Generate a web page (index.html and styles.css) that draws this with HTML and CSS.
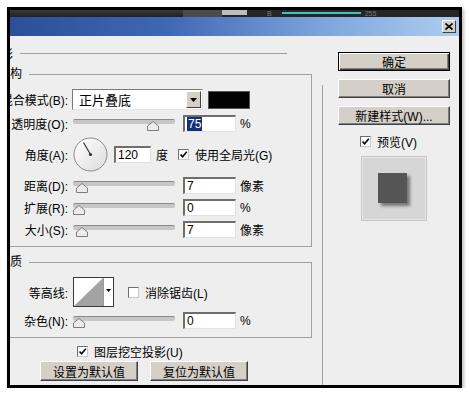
FILE: index.html
```html
<!DOCTYPE html>
<html lang="zh">
<head>
    <meta charset="UTF-8">
    <title>图层样式 - 投影</title>
    <link rel="stylesheet" href="styles.css">
</head>
<body>
    <div class="frame">
        <div class="strip">
            <span class="s1"></span>
            <span class="s2"></span>
            <span class="s3"></span>
            <span class="s-text s-b">B</span>
            <span class="s-cyan"></span>
            <span class="s-text">255</span>
        </div>

        <div class="titlebar">
            <button class="close">
                <svg width="8" height="7" viewBox="0 0 8 7"><path d="M0.5 0.5 L7.5 6.5 M7.5 0.5 L0.5 6.5" stroke="#000" stroke-width="1.6"/></svg>
            </button>
        </div>

        <div class="dialog">
            <div class="main">
                <div class="pane-head"><span>投影</span><i class="rule"></i></div>

                <fieldset class="group">
                    <legend>结构</legend>
                    <div class="rows">
                        <div class="row h21">
                            <span class="lbl">混合模式(B):</span>
                            <div class="select">
                                <span class="select-text">正片叠底</span>
                                <span class="select-btn"><svg width="7" height="4" viewBox="0 0 7 4"><polygon points="0,0 7,0 3.5,4" fill="#000"/></svg></span>
                            </div>
                            <span class="swatch"></span>
                        </div>
                        <div class="row">
                            <span class="lbl">透明度(O):</span>
                            <div class="slider"><div class="track"></div><svg class="thumb" style="margin-left:74px" width="12" height="10" viewBox="0 0 12 10"><polygon points="6,0.5 11.5,5 11.5,9.5 0.5,9.5 0.5,5" fill="#ececec" stroke="#7c7c7c"/></svg></div>
                            <span class="field"><span class="sel">75</span></span>
                            <span class="unit">%</span>
                        </div>
                        <div class="row h35">
                            <span class="lbl">角度(A):</span>
                            <svg class="dial" width="35" height="35" viewBox="0 0 35 35">
                                <defs>
                                    <linearGradient id="dialfill" x1="0" y1="0" x2="1" y2="1">
                                        <stop offset="0" stop-color="#ffffff"/>
                                        <stop offset="1" stop-color="#dcdcdc"/>
                                    </linearGradient>
                                </defs>
                                <circle cx="17.5" cy="17.5" r="16.5" fill="url(#dialfill)" stroke="#8a8a8a"/>
                                <path d="M17.5 17.5 L10.5 5.5" stroke="#333" stroke-width="1.2"/>
                                <circle cx="17.5" cy="17.5" r="1.6" fill="#333"/>
                            </svg>
                            <span class="field w37">120</span>
                            <span class="unit u5">度</span>
                            <span class="cb ml10"><svg width="9" height="9" viewBox="0 0 9 9"><path d="M1.5 4.5 L3.6 6.8 L7.8 1.8" fill="none" stroke="#000" stroke-width="1.6"/></svg></span>
                            <span class="cb-text">使用全局光(G)</span>
                        </div>
                        <div class="row">
                            <span class="lbl">距离(D):</span>
                            <div class="slider"><div class="track"></div><svg class="thumb" style="margin-left:3px" width="12" height="10" viewBox="0 0 12 10"><polygon points="6,0.5 11.5,5 11.5,9.5 0.5,9.5 0.5,5" fill="#ececec" stroke="#7c7c7c"/></svg></div>
                            <span class="field">7</span>
                            <span class="unit">像素</span>
                        </div>
                        <div class="row">
                            <span class="lbl">扩展(R):</span>
                            <div class="slider"><div class="track"></div><svg class="thumb" style="margin-left:0px" width="12" height="10" viewBox="0 0 12 10"><polygon points="6,0.5 11.5,5 11.5,9.5 0.5,9.5 0.5,5" fill="#ececec" stroke="#7c7c7c"/></svg></div>
                            <span class="field">0</span>
                            <span class="unit">%</span>
                        </div>
                        <div class="row">
                            <span class="lbl">大小(S):</span>
                            <div class="slider"><div class="track"></div><svg class="thumb" style="margin-left:3px" width="12" height="10" viewBox="0 0 12 10"><polygon points="6,0.5 11.5,5 11.5,9.5 0.5,9.5 0.5,5" fill="#ececec" stroke="#7c7c7c"/></svg></div>
                            <span class="field">7</span>
                            <span class="unit">像素</span>
                        </div>
                    </div>
                </fieldset>

                <fieldset class="group g2">
                    <legend>品质</legend>
                    <div class="rows">
                        <div class="row h30">
                            <span class="lbl">等高线:</span>
                            <div class="contour">
                                <svg width="29" height="28" viewBox="0 0 29 28"><polygon points="0,28 29,0 29,28" fill="#a3a3a3"/></svg>
                                <span class="contour-btn"><svg width="5" height="3" viewBox="0 0 5 3"><polygon points="0,0 5,0 2.5,3" fill="#000"/></svg></span>
                            </div>
                            <span class="cb ml14"></span>
                            <span class="cb-text">消除锯齿(L)</span>
                        </div>
                        <div class="row">
                            <span class="lbl">杂色(N):</span>
                            <div class="slider"><div class="track"></div><svg class="thumb" style="margin-left:0px" width="12" height="10" viewBox="0 0 12 10"><polygon points="6,0.5 11.5,5 11.5,9.5 0.5,9.5 0.5,5" fill="#ececec" stroke="#7c7c7c"/></svg></div>
                            <span class="field">0</span>
                            <span class="unit">%</span>
                        </div>
                    </div>
                </fieldset>

                <div class="row knock">
                    <span class="cb"><svg width="9" height="9" viewBox="0 0 9 9"><path d="M1.5 4.5 L3.6 6.8 L7.8 1.8" fill="none" stroke="#000" stroke-width="1.6"/></svg></span>
                    <span class="cb-text">图层挖空投影(U)</span>
                </div>

                <div class="defaults">
                    <button class="btn wide">设置为默认值</button>
                    <button class="btn wide">复位为默认值</button>
                </div>
            </div>

            <div class="side">
                <button class="btn side-btn default">确定</button>
                <button class="btn side-btn">取消</button>
                <button class="btn side-btn">新建样式(W)...</button>
                <div class="row preview-toggle">
                    <span class="cb"><svg width="9" height="9" viewBox="0 0 9 9"><path d="M1.5 4.5 L3.6 6.8 L7.8 1.8" fill="none" stroke="#000" stroke-width="1.6"/></svg></span>
                    <span class="cb-text">预览(V)</span>
                </div>
                <div class="preview"><div class="preview-square"></div></div>
            </div>
        </div>
    </div>
</body>
</html>
```

FILE: styles.css
```css
body {
    margin: 0;
    background-color: #fff;
    font-family: "Liberation Sans", "Noto Sans CJK SC", sans-serif;
    font-size: 12px;
    color: #000;
}
.frame {
    margin: 7px 0 0 7px;
    width: 455px;
    height: 381px;
    box-sizing: border-box;
    border: 3px solid #000;
    box-shadow: 2px 2px 3px rgba(0, 0, 0, 0.25);
    display: flex;
    flex-direction: column;
    overflow: hidden;
}

/* photoshop window showing behind */
.strip {
    height: 7px;
    display: flex;
    align-items: flex-start;
    background-color: #262626;
}
.s1 {
    width: 173px;
    height: 7px;
    background: linear-gradient(#3a3a3a, #222);
}
.s2 {
    width: 39px;
    height: 7px;
    background-color: #4b4b4b;
}
.s3 {
    width: 25px;
    height: 5px;
    background-color: #bdbdbd;
}
.s-text {
    font-size: 7px;
    line-height: 7px;
    color: #7a7a7a;
}
.s-b {
    margin: 0 10px 0 20px;
}
.s-cyan {
    width: 79px;
    height: 2px;
    margin: 2px 4px 0 0;
    background-color: #3cc4c4;
}

.titlebar {
    height: 19px;
    display: flex;
    align-items: center;
    justify-content: flex-end;
    padding-right: 3px;
    background: linear-gradient(to right, #2b4f98 0%, #3e68b4 35%, #7ea5dc 70%, #aecdf0 100%);
}
.close {
    width: 14px;
    height: 13px;
    padding: 0;
    display: flex;
    align-items: center;
    justify-content: center;
    background-color: #d4d0c8;
    border: 1px solid;
    border-color: #fff #404040 #404040 #fff;
}

.dialog {
    flex: 1;
    display: flex;
    background-color: #eeeeee;
}
.main {
    width: 313px;
    flex: none;
    padding-top: 9px;
    overflow: hidden;
    background: linear-gradient(#a0a0a0, #a0a0a0) right 0 top 49px / 1px 100% no-repeat;
}
.pane-head {
    height: 16px;
    width: 298px;
    margin-left: -21px;
    display: flex;
    align-items: center;
    gap: 7px;
}
.rule {
    flex: 1;
    border-top: 1px solid #a0a0a0;
}

.group {
    margin: 6px 0 0 -15px;
    width: 317px;
    box-sizing: border-box;
    padding: 8px 0 8px 0;
    border: 1px solid #a0a0a0;
    min-width: 0;
}
.group legend {
    padding: 0 7px 0 2px;
    line-height: 14px;
}
.g2 {
    margin-top: 8px;
}
.rows {
    display: flex;
    flex-direction: column;
    gap: 5px;
}
.row {
    display: flex;
    align-items: center;
    height: 17px;
    white-space: nowrap;
}
.h21 {
    height: 21px;
}
.h30 {
    height: 30px;
}
.h35 {
    height: 35px;
}
.lbl {
    width: 72px;
    flex: none;
    display: flex;
    justify-content: flex-end;
}

.select {
    width: 131px;
    height: 21px;
    margin-left: 4px;
    box-sizing: border-box;
    display: flex;
    align-items: center;
    background-color: #fff;
    border: 1px solid;
    border-color: #7a7a7a #e4e4e4 #e4e4e4 #7a7a7a;
}
.select-text {
    flex: 1;
    padding-left: 6px;
    font-size: 13px;
}
.select-btn {
    width: 15px;
    height: 17px;
    margin-right: 1px;
    box-sizing: border-box;
    display: flex;
    align-items: center;
    justify-content: center;
    background-color: #d4d0c8;
    border: 1px solid;
    border-color: #fff #404040 #404040 #fff;
}
.swatch {
    width: 42px;
    height: 18px;
    margin-left: 5px;
    box-sizing: border-box;
    background-color: #000;
    border: 1px solid #555;
}

.slider {
    width: 102px;
    flex: none;
    margin: 3px 0 0 5px;
}
.track {
    height: 4px;
    background-color: #c6c6c6;
    border-top: 1px solid #8a8a8a;
    border-radius: 2px;
}
.thumb {
    display: block;
    margin-top: -3px;
}

.field {
    width: 53px;
    height: 17px;
    margin-left: 8px;
    box-sizing: border-box;
    padding-left: 2px;
    display: flex;
    align-items: center;
    background-color: #fff;
    border-style: solid;
    border-width: 2px 1px 1px 2px;
    border-color: #6e6e6e #e2e2e2 #e2e2e2 #6e6e6e;
}
.w37 {
    width: 37px;
    margin-left: 6px;
}
.sel {
    padding: 0 1px;
    background-color: #12307a;
    color: #fff;
}
.unit {
    margin-left: 4px;
}
.u5 {
    margin-left: 5px;
}
.dial {
    margin-left: 5px;
    flex: none;
}

.cb {
    width: 11px;
    height: 11px;
    flex: none;
    box-sizing: border-box;
    display: flex;
    align-items: center;
    justify-content: center;
    background-color: #fff;
    border: 1px solid;
    border-color: #6e6e6e #c8c8c8 #c8c8c8 #6e6e6e;
}
.ml10 {
    margin-left: 10px;
}
.ml14 {
    margin-left: 14px;
}
.cb-text {
    margin-left: 6px;
}

.contour {
    width: 41px;
    height: 30px;
    margin-left: 5px;
    box-sizing: border-box;
    display: flex;
    background-color: #fff;
    border: 1px solid #3a3a3a;
}
.contour-btn {
    flex: 1;
    display: flex;
    align-items: center;
    justify-content: center;
    border-left: 1px solid #9a9a9a;
    padding-bottom: 4px;
}

.knock {
    height: 14px;
    margin: 6px 0 0 67px;
}
.defaults {
    display: flex;
    gap: 12px;
    margin: 3px 0 0 30px;
}
.btn {
    padding: 0;
    font-family: inherit;
    font-size: 12px;
    color: #000;
    background-color: #d4d0c8;
    border: 1px solid;
    border-color: #fff #404040 #404040 #fff;
    box-shadow: inset -1px -1px #808080;
}
.wide {
    width: 98px;
    height: 20px;
}

.side {
    flex: 1;
    display: flex;
    flex-direction: column;
    padding: 16px 0 0 15px;
}
.side-btn {
    width: 112px;
    height: 19px;
    margin-bottom: 8px;
}
.default {
    border: 1px solid #000;
    box-shadow: inset 1px 1px #fff, inset -1px -1px #404040, inset -2px -2px #808080;
}
.preview-toggle {
    height: 11px;
    margin: 3px 0 0 22px;
}
.preview {
    width: 66px;
    height: 65px;
    margin: 9px 0 0 23px;
    box-sizing: border-box;
    padding: 16px 0 0 16px;
    background-color: #d6d6d6;
    border: 1px solid #c6c6c6;
    box-shadow: inset 0 0 0 1px #e6e6e6;
}
.preview-square {
    width: 29px;
    height: 30px;
    background-color: #555;
    box-shadow: 3px 3px 3px rgba(0, 0, 0, 0.45);
}
```
